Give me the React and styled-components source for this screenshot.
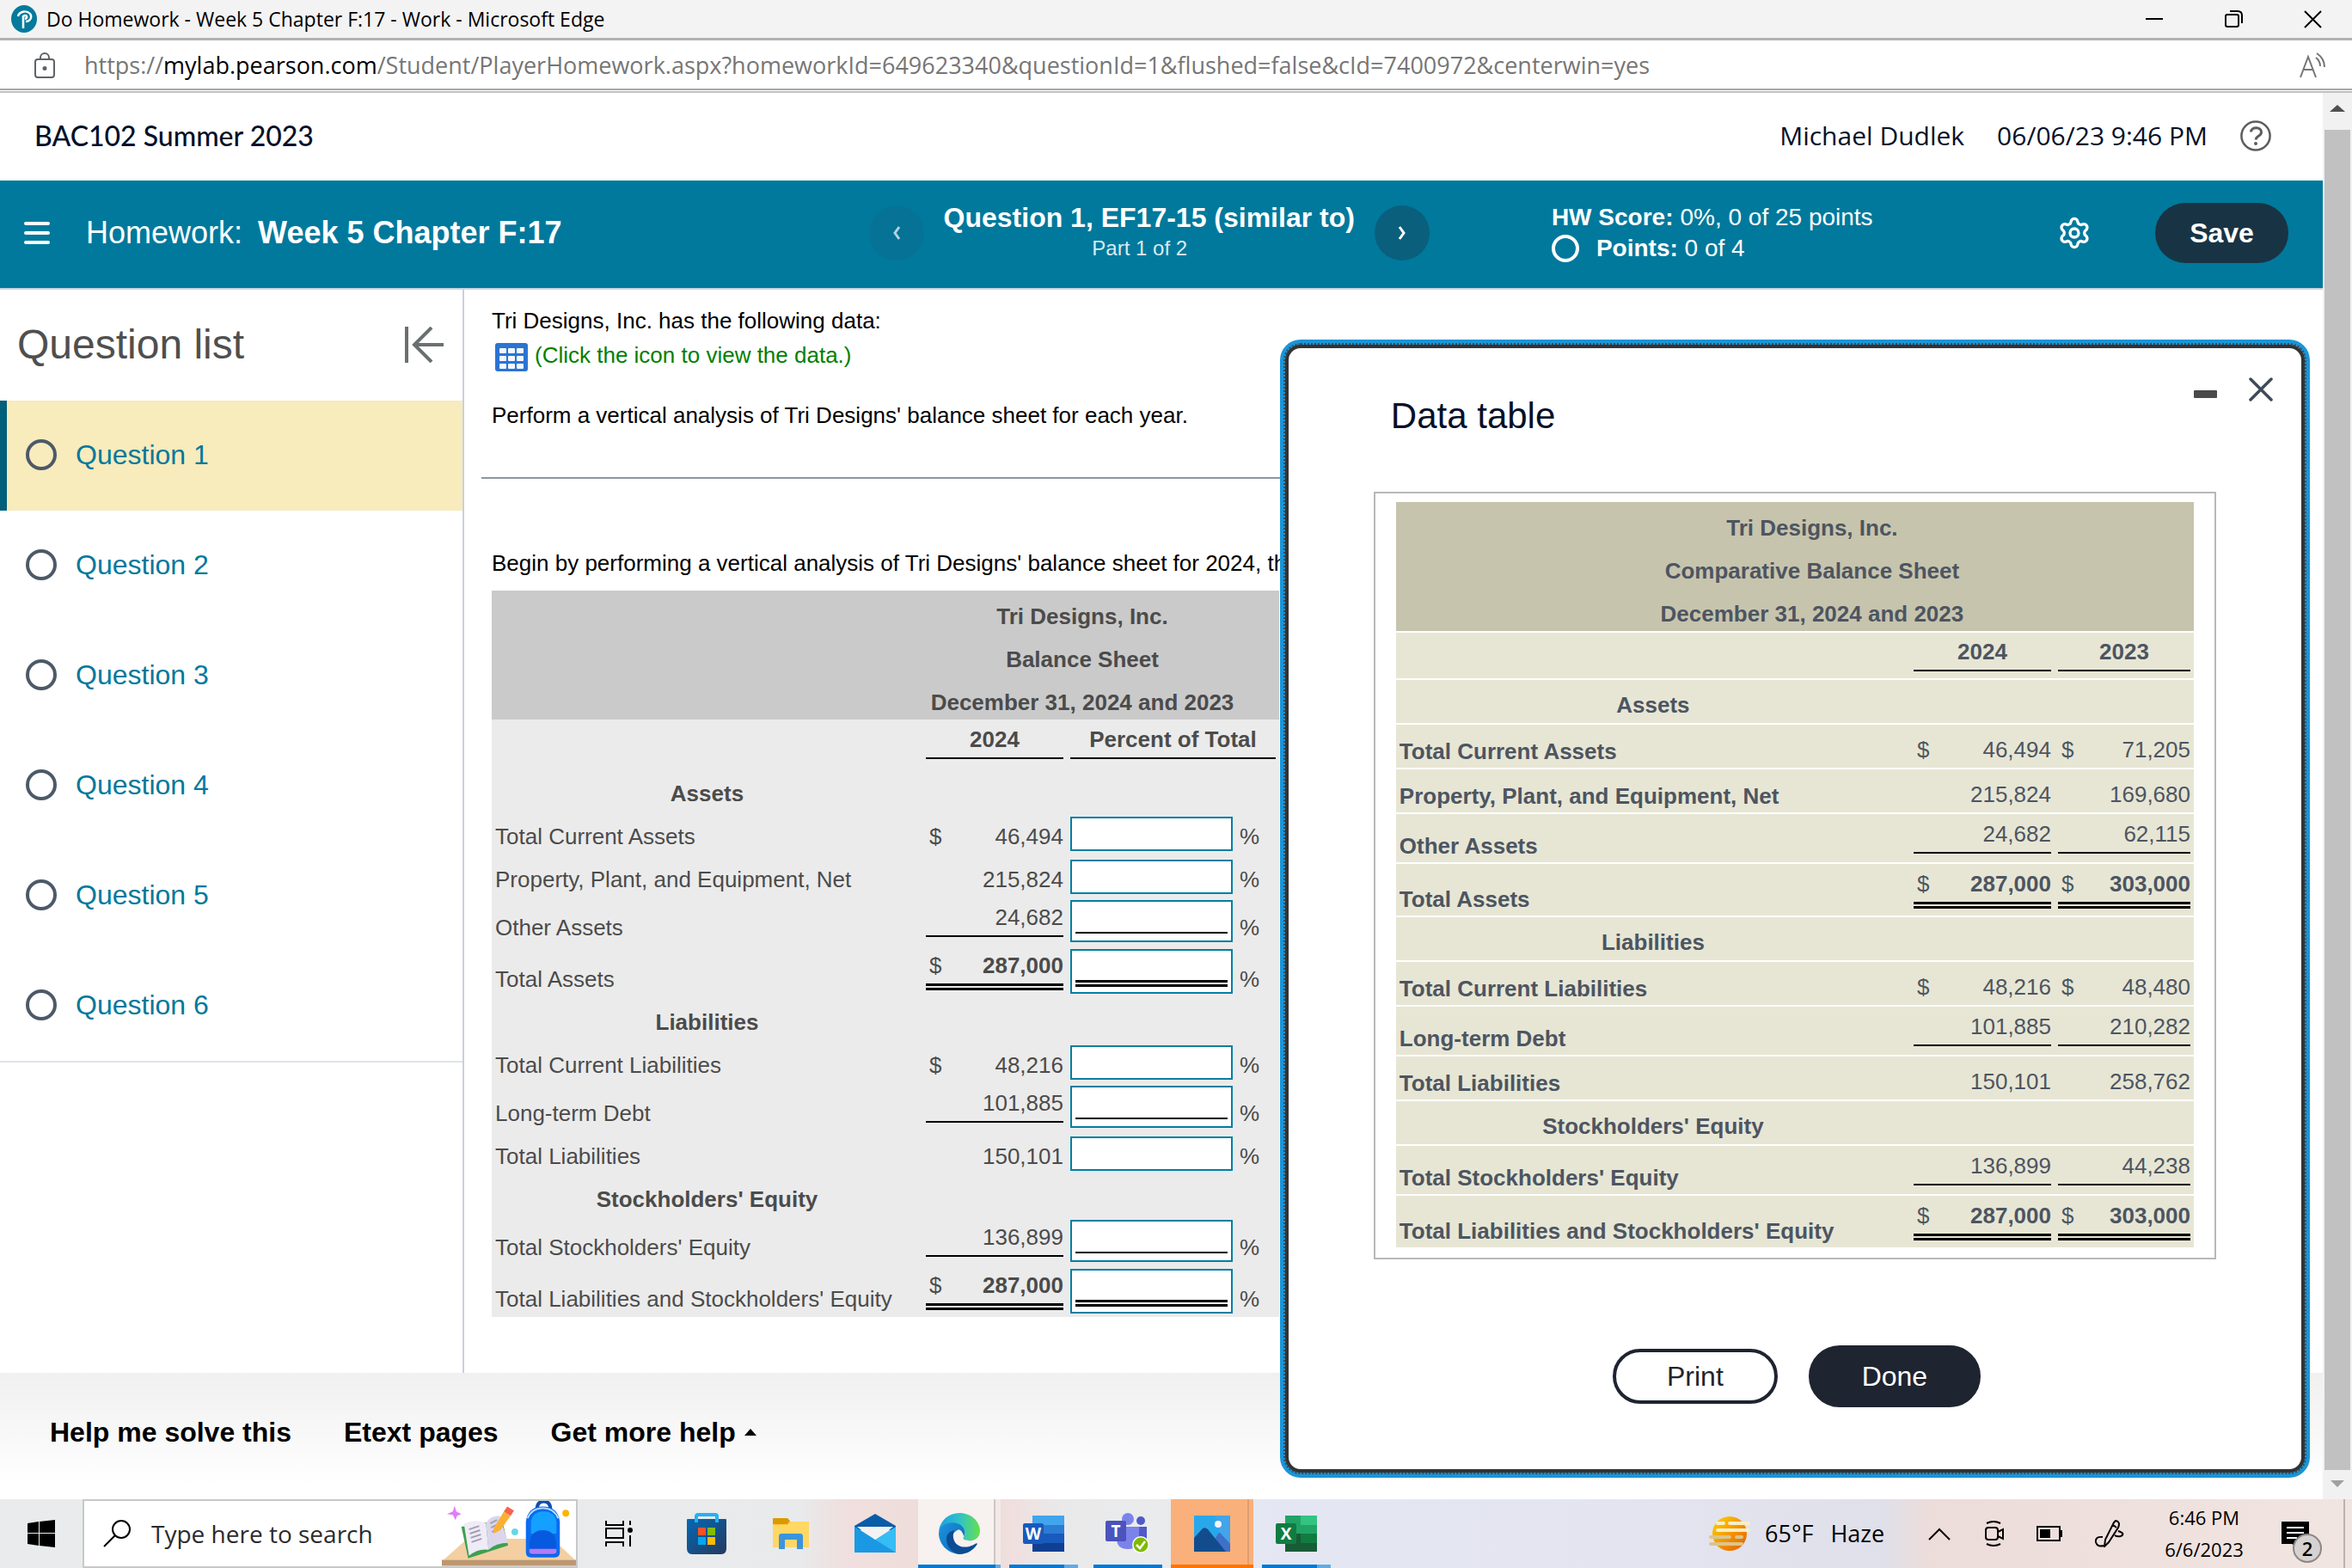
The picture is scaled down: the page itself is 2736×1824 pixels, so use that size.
import React from 'react';
import styled, { createGlobalStyle, css } from 'styled-components';
import { Settings } from 'lucide-react';

const GlobalStyle = createGlobalStyle`
  *, *::before, *::after {
    box-sizing: border-box;
  }
  body {
    margin: 0;
    background: #ffffff;
    font-family: "Liberation Sans", Arial, sans-serif;
    font-size: 26px;
    line-height: 30px;
    color: #000000;
  }
  button {
    margin: 0;
    padding: 0;
    border: 0;
    background: none;
    font: inherit;
    color: inherit;
    cursor: pointer;
  }
  svg {
    display: block;
    flex: none;
  }
`;

const uiFont = '"Open Sans", "Noto Sans", sans-serif';

const Window = styled.div`
  display: flex;
  flex-direction: column;
  min-height: 100vh;
`;

/* Browser chrome */

const TitleBar = styled.header`
  display: flex;
  align-items: center;
  height: 47px;
  padding-left: 13px;
  background: #f3f3f3;
  border-bottom: 3px solid #b2b2b2;
  font-family: ${uiFont};
  font-size: 23px;
`;

const WindowTitle = styled.span`
  flex: 1;
  margin-left: 11px;
`;

const WindowButton = styled.button`
  display: flex;
  justify-content: center;
  width: 92px;
`;

const AddressBar = styled.div`
  display: flex;
  align-items: center;
  height: 58px;
  padding: 2px 30px 0 40px;
  border-bottom: 2px solid #a8a8a8;
`;

const Url = styled.div`
  flex: 1;
  margin-left: 34px;
  font-family: ${uiFont};
  font-size: 27px;
  color: #767676;

  b {
    font-weight: 400;
    color: #000000;
  }
`;

const Viewport = styled.div`
  display: flex;
  flex: 1;
  margin-top: 1px;
  border-top: 2px solid #c0c0c0;
`;

const Page = styled.div`
  position: relative;
  display: flex;
  flex: 1;
  flex-direction: column;
  min-width: 0;
`;

const Scrollbar = styled.div`
  display: flex;
  flex-direction: column;
  align-items: center;
  width: 34px;
  padding: 14px 0;
  background: #f1f1f1;
`;

const Thumb = styled.div`
  flex: 1;
  width: 30px;
  margin: 21px 0 12px;
  background: #c1c1c1;
`;

/* Course header */

const CourseBar = styled.div`
  display: flex;
  align-items: center;
  height: 102px;
  padding: 0 60px 2px 40px;
  color: #05112a;
`;

const CourseName = styled.div`
  flex: 1;
  font-family: Lato, sans-serif;
  font-size: 32px;
  font-weight: 500;
`;

const UserInfo = styled.div`
  display: flex;
  align-items: center;
  gap: 38px;
  font-family: ${uiFont};
  font-size: 30px;
`;

const AssignmentBar = styled.div`
  display: grid;
  grid-template-columns: 37.4% auto 1fr;
  align-items: center;
  height: 127px;
  padding-bottom: 4px;
  background: #00799c;
  border-bottom: 2px solid #c7d3e0;
  color: #ffffff;
`;

const AssignmentName = styled.h1`
  display: flex;
  align-items: center;
  margin: 0;
  padding-left: 28px;
  font-size: 36px;
  font-weight: 400;

  b {
    margin-left: 18px;
  }
`;

const MenuButton = styled.button`
  margin-right: 42px;
`;

const QuestionNav = styled.div`
  display: flex;
  align-items: center;
  gap: 23px;
`;

const NavButton = styled.button`
  display: flex;
  align-items: center;
  justify-content: center;
  width: 64px;
  height: 64px;
  border-radius: 50%;
  background: ${(p) => (p.disabled ? '#067396' : '#0a5f7d')};
  color: ${(p) => (p.disabled ? '#b3d3df' : '#ffffff')};
`;

const QuestionTitle = styled.div`
  font-size: 24px;
  line-height: 36px;
  text-align: center;
  color: #dbeaf0;

  b {
    display: block;
    font-size: 32px;
    color: #ffffff;
  }
  span {
    padding-right: 22px;
  }
`;

const ScoreArea = styled.div`
  display: flex;
  align-items: center;
  padding: 0 40px 0 142px;
`;

const Score = styled.div`
  flex: 1;
  font-size: 28px;
  line-height: 36px;
`;

const ScoreLine = styled.div`
  display: flex;
  align-items: center;
  gap: ${(p) => p.$gap || 8}px;
`;

const Ring = styled.span`
  flex: none;
  width: ${(p) => p.$size}px;
  height: ${(p) => p.$size}px;
  border: 4px solid ${(p) => p.$color};
  border-radius: 50%;
`;

const SaveButton = styled.button`
  width: 155px;
  height: 70px;
  margin-left: 74px;
  border-radius: 35px;
  background: #183444;
  font-size: 32px;
  font-weight: 700;
`;

/* Question list */

const Body = styled.div`
  display: flex;
  flex: 1;
`;

const Sidebar = styled.nav`
  width: 540px;
  border-right: 2px solid #c9d0de;
`;

const SidebarHead = styled.div`
  display: flex;
  align-items: center;
  justify-content: space-between;
  height: 129px;
  padding: 0 21px 2px 20px;

  h2 {
    margin: 0;
    font-size: 48px;
    font-weight: 400;
    color: #4f4f4f;
  }
`;

const QuestionList = styled.ul`
  margin: 0;
  padding: 0;
  border-bottom: 2px solid #dfe3ea;
  list-style: none;
`;

const QuestionButton = styled.button`
  display: flex;
  align-items: center;
  gap: 22px;
  width: 100%;
  height: 128px;
  padding: 0 0 2px 22px;
  border-left: 8px solid ${(p) => (p.$active ? '#005f7a' : 'transparent')};
  background: ${(p) => (p.$active ? '#f8ebbc' : 'transparent')};
  font-size: 32px;
  color: #00799c;
`;

/* Exercise */

const Exercise = styled.main`
  flex: 1;
  min-width: 0;
  padding: 21px 32px 64px 20px;
  overflow: hidden;
  white-space: nowrap;
`;

const Text = styled.p`
  margin: 0;
  padding-left: 12px;
`;

const DataLink = styled.button`
  display: flex;
  align-items: flex-start;
  gap: 8px;
  height: 34px;
  margin: 10px 0 36px 16px;
  color: #008000;
`;

const Divider = styled.hr`
  margin: 57px 0 83px;
  border: 0;
  border-top: 2px solid #8d95a3;
`;

const SheetArea = styled.div`
  padding: 17px 0 0 12px;
`;

/* Balance sheets */

const themes = {
  plain: css`
    --ink: #4b4b4b;
    --head: #cacaca;
    --row: #ebebeb;
    border-spacing: 0;
  `,
  tan: css`
    --ink: #4d5561;
    --head: #c7c4ad;
    --row: #e7e6d5;
    border-spacing: 0 2px;
  `,
};

const Sheet = styled.table`
  ${(p) => themes[p.$theme]}
  width: ${(p) => p.$width};
  table-layout: fixed;
  border-collapse: separate;
  color: var(--ink);
`;

const SheetTitle = styled.th`
  padding: 15px 0 5px ${(p) => p.$indent}px;
  background: var(--head);
  text-align: center;

  span {
    display: block;
  }
  span + span {
    margin-top: 20px;
  }
`;

const Cell = styled.td`
  height: ${(p) => p.$height || 50}px;
  padding: 0 4px ${(p) => p.$bottom || 0}px;
  background: var(--row);
  vertical-align: bottom;
  text-align: ${(p) => p.$align || 'left'};
  font-weight: ${(p) => (p.$bold ? 700 : 400)};
`;

const lines = {
  single: '2px solid #000000',
  double: '8px double #000000',
};

const Amount = styled.div`
  display: flex;
  justify-content: ${(p) => (p.$center ? 'center' : 'space-between')};
  padding: 0 0 ${(p) => (p.$line ? 6 : 0)}px ${(p) => (p.$center ? 0 : 4)}px;
  border-bottom: ${(p) => lines[p.$line] || 0};

  b {
    font-weight: ${(p) => (p.$line === 'double' || p.$center ? 700 : 400)};
  }
`;

const Answer = styled.label`
  display: flex;
  align-items: flex-end;
  gap: 8px;
`;

const answerBox = {
  none: { height: 40, bottom: 0 },
  single: { height: 49, bottom: 8 },
  double: { height: 52, bottom: 6 },
};

const AnswerBox = styled.span`
  display: flex;
  width: 189px;
  height: ${(p) => answerBox[p.$line].height}px;
  padding: 0 4px ${(p) => answerBox[p.$line].bottom}px;
  border: 2px solid #007fa3;
  background: #ffffff;

  input {
    width: 100%;
    padding: 0;
    border: 0;
    border-bottom: ${(p) => lines[p.$line] || 0};
    border-radius: 0;
    background: none;
    font: inherit;
    text-align: right;
    outline: none;
  }
`;

const Percent = styled.span`
  padding-bottom: 2px;
`;

/* Data table dialog */

const Dialog = styled.section`
  position: absolute;
  top: 293px;
  right: 21px;
  width: 43.9%;
  border: 4px solid #333333;
  border-radius: 18px;
  background: #ffffff;
  box-shadow: 0 0 0 6px #1a95d8;
  outline: 2px dotted #3c4a52;
`;

const DialogHead = styled.div`
  display: flex;
  align-items: flex-start;
  padding: 34px 33px 0 119px;

  h2 {
    flex: 1;
    margin: 21px 0 64px;
    font-size: 42px;
    font-weight: 400;
    line-height: 48px;
    color: #05112a;
  }
  button + button {
    margin-left: 37px;
  }
`;

const Frame = styled.div`
  margin: 0 99px;
  padding: 8px 24px 10px 24px;
  border: 2px solid #b8b8b8;
`;

const DialogActions = styled.div`
  display: flex;
  align-items: center;
  justify-content: center;
  gap: 36px;
  margin: 100px 0 72px;
  padding-left: 4px;
`;

const DialogButton = styled.button`
  width: ${(p) => (p.$primary ? 200 : 192)}px;
  height: ${(p) => (p.$primary ? 72 : 64)}px;
  border: 4px solid #1e2430;
  border-radius: 36px;
  background: ${(p) => (p.$primary ? '#1e2430' : '#ffffff')};
  color: ${(p) => (p.$primary ? '#ffffff' : '#1e2430')};
  font-size: 32px;
`;

/* Help footer */

const HelpBar = styled.footer`
  display: flex;
  align-items: center;
  gap: 61px;
  height: 147px;
  padding: 0 58px 10px;
  background: linear-gradient(#f0f0f0, #ffffff 90%);
  font-size: 32px;
  font-weight: 700;

  button {
    display: flex;
    align-items: center;
    gap: 10px;
  }
`;

/* Taskbar */

const Taskbar = styled.footer`
  display: flex;
  align-items: center;
  height: 80px;
  background: linear-gradient(
    90deg,
    #e9ebec 0%,
    #e8eaeb 34%,
    #f0dfde 36%,
    #ecdcd7 42%,
    #f0dfde 43%,
    #e9e9ea 45%,
    #eaebec 49%,
    #e4e7f3 54%,
    #e3e4ef 70%,
    #dfe0ea 80%,
    #ecdcda 82%,
    #f1e5e1 100%
  );
  font-family: ${uiFont};
`;

const StartButton = styled.button`
  display: flex;
  justify-content: center;
  width: 96px;
`;

const Search = styled.label`
  display: flex;
  align-items: center;
  width: 576px;
  height: 80px;
  padding-left: 22px;
  border: 2px solid #c8c8c8;
  background: #ffffff;

  input {
    flex: 1;
    min-width: 0;
    padding: 0 0 0 24px;
    border: 0;
    background: none;
    font-family: ${uiFont};
    font-size: 28px;
    outline: none;
  }
  input::placeholder {
    color: #2b2b2b;
    opacity: 1;
  }
`;

const Tasks = styled.div`
  display: flex;
  flex: 1;
  gap: 2px;
`;

const activeTask = {
  edge: css`
    background: linear-gradient(90deg, #f7f1ef 88px, #cfc6c4 88px 90px, #f3eae8 90px);
    &::after {
      left: 0;
      right: 0;
      background: linear-gradient(90deg, #0078d7 90px, #62a9e4 90px);
    }
  `,
  photos: css`
    background: linear-gradient(90deg, #fab07a 89px, #e09e70 89px 91px, #fab07a 91px);
    &::after {
      left: 0;
      right: 0;
      background: #ff7300;
    }
  `,
  stacked: css`
    &::after {
      background: linear-gradient(90deg, #0078d7 64px, #62a9e4 64px);
    }
  `,
  open: css`
    &::after {
      background: #0078d7;
    }
  `,
};

const Task = styled.button`
  position: relative;
  display: flex;
  align-items: center;
  justify-content: center;
  width: 96px;
  height: 80px;

  &:first-child {
    margin-right: 4px;
  }
  &::after {
    content: '';
    position: absolute;
    left: 8px;
    right: 8px;
    bottom: 0;
    height: 4px;
  }
  ${(p) => activeTask[p.$state]}
`;

const Weather = styled.button`
  display: flex;
  align-items: center;
  gap: 17px;
  width: 236px;
  font-size: 27px;

  span + span {
    margin-left: 3px;
  }
`;

const TrayButton = styled.button`
  position: relative;
  display: flex;
  justify-content: center;
  width: ${(p) => p.$width || 64}px;
`;

const Clock = styled.div`
  width: 144px;
  font-size: 22px;
  line-height: 37px;
  text-align: center;
`;

const Badge = styled.span`
  position: absolute;
  top: 14px;
  left: 31px;
  width: 34px;
  height: 34px;
  border: 2px solid #8b8786;
  border-radius: 50%;
  background: #d6d2d1;
  font-size: 22px;
  font-weight: 600;
  line-height: 30px;
  text-align: center;
`;

const ShowDesktop = styled.div`
  width: 10px;
  height: 80px;
  margin-left: 22px;
  border-left: 2px solid #bdb1b0;
`;

const PearsonIcon = () => (
  <svg width="30" height="32" viewBox="0 0 30 32">
    <ellipse cx="15" cy="16" rx="15" ry="16" fill="#047a9c" />
    <path d="M8 13c1-5 9-8 14-3 3 4 0 9-5 9" fill="none" stroke="#fff" strokeWidth="2.4" />
    <path d="M14 27V13c4-3 6 2 2 3" fill="none" stroke="#fff" strokeWidth="2.6" />
  </svg>
);

const LockIcon = () => (
  <svg width="24" height="30" viewBox="0 0 24 30" fill="none" stroke="#5f6368" strokeWidth="2">
    <rect x="1" y="8" width="22" height="21" rx="3" />
    <path d="M7 8V6a5 5 0 0 1 10 0v2" />
    <circle cx="12" cy="18.500" r="1.500" fill="#5f6368" />
  </svg>
);

const ReadAloudIcon = () => (
  <svg width="31" height="30" viewBox="0 0 31 30" fill="none" stroke="#757575" strokeWidth="2">
    <path d="M1 29L10 5l9 24M4.500 20h11" />
    <path d="M19 6q5 4 5 10M20 1q9 6 9 16" />
  </svg>
);

const HelpIcon = () => (
  <svg width="36" height="36" viewBox="0 0 36 36" fill="none" stroke="#5d5d5d" strokeWidth="2.500">
    <circle cx="18" cy="18" r="16.600" />
    <path d="M12.500 13.500c.5-6.500 12-6.500 12 .3 0 5-6.300 4-6.300 8.700" strokeWidth="3" />
    <circle cx="18" cy="27" r="2" fill="#5d5d5d" stroke="none" />
  </svg>
);

const Chevron = ({ left }) => (
  <svg width="12" height="16" viewBox="0 0 12 16" fill="none" stroke="currentColor" strokeWidth="3">
    <path d={left ? 'M9 1L4 8l5 7' : 'M3 1l5 7-5 7'} />
  </svg>
);

const CollapseIcon = () => (
  <svg width="46" height="42" viewBox="0 0 46 42" fill="none" stroke="#6a7070" strokeWidth="4">
    <path d="M2 0v42M45 21H12M31 1L11 21l20 20" />
  </svg>
);

const GridIcon = () => (
  <svg width="38" height="34" viewBox="0 0 38 34">
    <rect y="1" width="38" height="33" rx="3" fill="#2b74d3" />
    {[0, 1, 2].map((r) =>
      [0, 1, 2].map((c) => (
        <rect key={`${r}${c}`} x={5 + c * 10} y={7 + r * 9} width="8" height="6" rx="1" fill="#f4f8fe" />
      ))
    )}
  </svg>
);

const SearchArt = () => (
  <svg width="156" height="76" viewBox="0 0 158 76">
    <path d="M30 44h100l27 25H2z" fill="#f3cfa2" />
    <path d="M0 69h158v7H0z" fill="#bd9770" />
    <path d="M15 5l2 7 6 3-5 2-2 5-3-6-7-1 7-3z" fill="#e17cf8" />
    <path d="M23 30l8 37 47-15-7-30z" fill="#3da04f" />
    <path d="M26 26q14-6 26 0l3 31q-12-2-23 7z" fill="#efebf7" />
    <path d="M52 26q4-9 16-9l10 32q-14 0-23 8z" fill="#dcd6ec" />
    <path d="M32 33l12-4M33 38l12-4M34 43l12-4M35 48l12-4M57 26l8-4M58 31l8-4M59 36l8-4" stroke="#a49fb3" strokeWidth="2" />
    <path d="M61 32l12-20 8 5-12 17-8 4z" fill="#fbb034" />
    <path d="M73 12l4-6 8 5-4 6z" fill="#f9604d" />
    <circle cx="86" cy="36" r="4" fill="#68d6e8" />
    <circle cx="146" cy="14" r="4" fill="#ffb300" />
    <path d="M112 10q0-10 8-10t8 10" fill="none" stroke="#0b4fae" strokeWidth="4" />
    <path d="M99 24q2-18 20-18t20 18v36q0 6-6 6h-28q-6 0-6-6z" fill="#0a6cf0" />
    <path d="M105 24q2-12 15-12t15 12v14h-30z" fill="#14a0ff" />
    <path d="M103 54q0-20 16-20t16 20v6q0 3-4 3h-24q-4 0-4-3z" fill="#0759e0" />
    <path d="M103 56h32v3q0 3-4 3h-24q-4 0-4-3z" fill="#b57bf5" />
    <path d="M101 20q5-12 18-12t18 12" fill="none" stroke="#b9dcff" strokeWidth="2" />
  </svg>
);

const TaskViewIcon = () => (
  <svg width="32" height="30" viewBox="0 0 32 30" fill="none" stroke="#000" strokeWidth="2">
    <path d="M1 0v5h20V0M1 30v-5h20v5M29 0v5M29 17v13" />
    <rect x="1" y="9" width="20" height="11" />
    <circle cx="29" cy="11" r="3" fill="#000" stroke="none" />
  </svg>
);

const StoreIcon = () => (
  <svg width="46" height="48" viewBox="0 0 46 48">
    <defs>
      <linearGradient id="bag" x2="1" y2="1">
        <stop stopColor="#0568b4" />
        <stop offset="1" stopColor="#243a5e" />
      </linearGradient>
    </defs>
    <path d="M0 8q0-1 1-1h44q1 0 1 1v33q0 7-6 7H6q-6 0-6-7z" fill="url(#bag)" />
    <path d="M11 11V4q0-2 2-2h20q2 0 2 2v7" fill="none" stroke="#22b1f5" strokeWidth="4" />
    <path d="M13 17h9v9h-9z" fill="#f35325" />
    <path d="M24 17h9v9h-9z" fill="#81bc06" />
    <path d="M13 28h9v9h-9z" fill="#05a6f0" />
    <path d="M24 28h9v9h-9z" fill="#ffba08" />
  </svg>
);

const FolderIcon = () => (
  <svg width="42" height="36" viewBox="0 0 42 36">
    <path d="M0 1h17l3 3h22v30H0z" fill="#ffca42" />
    <path d="M0 1q0-1 1-1h16l3 3-3 4H0z" fill="#d99a00" />
    <path d="M0 8h17l4-4h20q1 0 1 1v29H0z" fill="#ffd765" />
    <path d="M7 36V21q0-3 3-3h22q3 0 3 3v15h-7V25H14v11z" fill="#3b94dc" />
  </svg>
);

const MailIcon = () => (
  <svg width="48" height="46" viewBox="0 0 48 46">
    <path d="M0 14L24 0l24 14v5H0z" fill="#0a5ba8" />
    <path d="M3 15h42L24 32z" fill="#f3f3f3" />
    <path d="M0 15l24 15 24-15v30H0z" fill="#35bdf4" />
    <path d="M0 15l48 30H0z" fill="#1b98e4" />
    <path d="M4 15h40L24 30z" fill="#f3f3f3" />
  </svg>
);

const EdgeIcon = () => (
  <svg width="48" height="48" viewBox="0 0 256 256">
    <defs>
      <linearGradient id="edgeTop" x1="0" y1=".5" x2="1" y2=".5">
        <stop stopColor="#1d9fe0" />
        <stop offset=".5" stopColor="#2fc2c8" />
        <stop offset="1" stopColor="#67e04c" />
      </linearGradient>
      <linearGradient id="edgeSide" y2="1">
        <stop stopColor="#1b95dd" />
        <stop offset="1" stopColor="#0e64b8" />
      </linearGradient>
    </defs>
    <path d="M0 120C4 50 60 0 128 0c75 0 128 54 128 110 0 40-32 62-66 62-28 0-38-9-38-17 0-6 9-9 9-27 0-26-27-52-64-52C50 76 5 90 0 120z" fill="url(#edgeTop)" />
    <path d="M0 124C5 80 45 60 90 60c40 0 71 28 71 62 0 9-2 17-6 23-5-28-22-40-30-42-30 10-45 38-45 67 0 40 30 74 68 85-82 6-148-55-148-131z" fill="url(#edgeSide)" />
    <path d="M96 106c-20 50 6 102 60 105 35 2 60-14 75-22 6-3 10 1 6 7-26 40-68 62-114 59-45-13-75-50-75-95 0-27 18-46 48-54z" fill="#0b4c94" />
  </svg>
);

const WordIcon = () => (
  <svg width="48" height="42" viewBox="0 0 48 42">
    <path d="M11 0h37v11H11z" fill="#41a5ee" />
    <path d="M11 11h37v10H11z" fill="#2b7cd3" />
    <path d="M11 21h37v11H11z" fill="#185abd" />
    <path d="M11 32h37v10H11z" fill="#103f91" />
    <rect y="9" width="24" height="24" rx="2" fill="#185abd" />
    <text x="12" y="28" textAnchor="middle" fontFamily="Open Sans, sans-serif" fontSize="19" fontWeight="700" fill="#fff">
      W
    </text>
  </svg>
);

const ExcelIcon = () => (
  <svg width="48" height="42" viewBox="0 0 48 42">
    <path d="M11 0h37v42H11z" fill="#21a366" />
    <path d="M29 0h19v11H29z" fill="#33c481" />
    <path d="M11 21h18v11H11z" fill="#185c37" />
    <path d="M29 21h19v11H29z" fill="#107c41" />
    <path d="M11 32h37v10H11z" fill="#185c37" />
    <rect y="9" width="24" height="24" rx="2" fill="#107c41" />
    <text x="12" y="28" textAnchor="middle" fontFamily="Open Sans, sans-serif" fontSize="19" fontWeight="700" fill="#fff">
      X
    </text>
  </svg>
);

const TeamsIcon = () => (
  <svg width="52" height="48" viewBox="0 0 52 48">
    <circle cx="26" cy="7" r="7" fill="#7b83eb" />
    <circle cx="41" cy="9" r="5" fill="#5059c9" />
    <path d="M33 16h15v14q0 8-8 8h-7z" fill="#5059c9" />
    <path d="M13 16h26v14q0 12-13 12T13 30z" fill="#7b83eb" />
    <rect y="9" width="24" height="24" rx="2" fill="#4b53bc" />
    <text x="12" y="28" textAnchor="middle" fontFamily="Open Sans, sans-serif" fontSize="19" fontWeight="700" fill="#fff">
      T
    </text>
    <circle cx="41" cy="37" r="10" fill="#fff" />
    <circle cx="41" cy="37" r="8.5" fill="#7fba00" />
    <path d="M36 37l4 4 6-8" fill="none" stroke="#fff" strokeWidth="2.5" />
  </svg>
);

const PhotosIcon = () => (
  <svg width="42" height="42" viewBox="0 0 42 42">
    <path d="M0 0h42v42H0z" fill="#28a8ea" />
    <path d="M24 0h18v32L30 20z" fill="#5b9fe8" opacity=".5" />
    <path d="M16 42l12-21q1-2 3 0l11 12v9z" fill="#3f6fc9" />
    <path d="M0 26l10-11q3-2 6 1l21 26H0z" fill="#134c8c" />
    <circle cx="28" cy="10" r="4" fill="#f3f6fa" />
  </svg>
);

const HazeIcon = () => (
  <svg width="48" height="40" viewBox="0 0 48 40">
    <defs>
      <linearGradient id="sun" x2="1" y2="1">
        <stop stopColor="#ffd500" />
        <stop offset="1" stopColor="#e65a00" />
      </linearGradient>
    </defs>
    <circle cx="24" cy="20" r="20" fill="url(#sun)" />
    <path d="M10 8h7M24 8h22M10 16h36" stroke="#fbeec2" strokeWidth="4" strokeLinecap="round" />
    <path d="M2 24h22M32 24h6M2 32h36" stroke="#dcc58a" strokeWidth="4" strokeLinecap="round" />
  </svg>
);

const assets = [
  { section: 'Assets' },
  { label: 'Total Current Assets', values: ['46,494', '71,205'], dollar: true },
  { label: 'Property, Plant, and Equipment, Net', values: ['215,824', '169,680'] },
  { label: 'Other Assets', values: ['24,682', '62,115'], line: 'single' },
  { label: 'Total Assets', values: ['287,000', '303,000'], dollar: true, line: 'double' },
  { section: 'Liabilities' },
  { label: 'Total Current Liabilities', values: ['48,216', '48,480'], dollar: true },
  { label: 'Long-term Debt', values: ['101,885', '210,282'], line: 'single' },
  { label: 'Total Liabilities', values: ['150,101', '258,762'] },
  { section: "Stockholders' Equity" },
  { label: "Total Stockholders' Equity", values: ['136,899', '44,238'], line: 'single' },
  {
    label: "Total Liabilities and Stockholders' Equity",
    values: ['287,000', '303,000'],
    dollar: true,
    line: 'double',
  },
];

const rowHeight = { single: 56, double: 60 };
const valueBottom = { single: 10, double: 8 };

function AmountCell({ row, value }) {
  return (
    <Cell $height={rowHeight[row.line]} $bottom={valueBottom[row.line] || 6}>
      <Amount $line={row.line}>
        <span>{row.dollar ? '$' : ''}</span>
        <b>{value}</b>
      </Amount>
    </Cell>
  );
}

function YearCell({ children, ...rest }) {
  return (
    <Cell as="th" scope="col" {...rest}>
      <Amount $line="single" $center>
        <b>{children}</b>
      </Amount>
    </Cell>
  );
}

function SectionRow({ title }) {
  return (
    <tr>
      <Cell as="th" scope="rowgroup" $bold $align="center" $bottom={6}>
        {title}
      </Cell>
      <Cell />
      <Cell />
    </tr>
  );
}

function AnswerSheet() {
  return (
    <Sheet $theme="plain" $width="916px">
      <colgroup>
        <col />
        <col width="168" />
        <col width="247" />
      </colgroup>
      <thead>
        <tr>
          <SheetTitle colSpan={3} $indent={458}>
            <span>Tri Designs, Inc.</span>
            <span>Balance Sheet</span>
            <span>December 31, 2024 and 2023</span>
          </SheetTitle>
        </tr>
        <tr>
          <Cell $height={57} />
          <YearCell $bottom={11}>2024</YearCell>
          <YearCell $bottom={11}>Percent of Total</YearCell>
        </tr>
      </thead>
      <tbody>
        {assets.map((row) =>
          row.section ? (
            <SectionRow key={row.section} title={row.section} />
          ) : (
            <tr key={row.label}>
              <Cell as="th" scope="row" $bottom={6}>
                {row.label}
              </Cell>
              <AmountCell row={row} value={row.values[0]} />
              <Cell $bottom={4}>
                <Answer>
                  <AnswerBox $line={row.line || 'none'}>
                    <input type="text" aria-label={`${row.label}, percent of total`} />
                  </AnswerBox>
                  <Percent>%</Percent>
                </Answer>
              </Cell>
            </tr>
          )
        )}
      </tbody>
    </Sheet>
  );
}

function DataSheet() {
  return (
    <Sheet $theme="tan" $width="100%">
      <colgroup>
        <col />
        <col width="168" />
        <col width="162" />
      </colgroup>
      <thead>
        <tr>
          <SheetTitle colSpan={3} $indent={40}>
            <span>Tri Designs, Inc.</span>
            <span>Comparative Balance Sheet</span>
            <span>December 31, 2024 and 2023</span>
          </SheetTitle>
        </tr>
        <tr>
          <Cell $height={53} />
          <YearCell $bottom={8}>2024</YearCell>
          <YearCell $bottom={8}>2023</YearCell>
        </tr>
      </thead>
      <tbody>
        {assets.map((row) =>
          row.section ? (
            <SectionRow key={row.section} title={row.section} />
          ) : (
            <tr key={row.label}>
              <Cell as="th" scope="row" $bold $bottom={4}>
                {row.label}
              </Cell>
              <AmountCell row={row} value={row.values[0]} />
              <AmountCell row={row} value={row.values[1]} />
            </tr>
          )
        )}
      </tbody>
    </Sheet>
  );
}

function DataDialog() {
  return (
    <Dialog role="dialog" aria-labelledby="data-table-title">
      <DialogHead>
        <h2 id="data-table-title">Data table</h2>
        <button type="button" aria-label="Minimize">
          <svg width="27" height="28" viewBox="0 0 27 28">
            <rect y="15" width="27" height="9" rx="1" fill="#4a4a4a" />
          </svg>
        </button>
        <button type="button" aria-label="Close">
          <svg width="28" height="28" viewBox="0 0 28 28" stroke="#3f4a59" strokeWidth="3.5" strokeLinecap="round">
            <path d="M2 2l24 24M26 2L2 26" />
          </svg>
        </button>
      </DialogHead>
      <Frame>
        <DataSheet />
      </Frame>
      <DialogActions>
        <DialogButton type="button">Print</DialogButton>
        <DialogButton type="button" $primary>
          Done
        </DialogButton>
      </DialogActions>
    </Dialog>
  );
}

function Browser() {
  return (
    <>
      <TitleBar>
        <PearsonIcon />
        <WindowTitle>Do Homework - Week 5 Chapter F:17 - Work - Microsoft Edge</WindowTitle>
        <WindowButton type="button" aria-label="Minimize window">
          <svg width="20" height="20" stroke="#000" strokeWidth="2">
            <path d="M0 10h20" />
          </svg>
        </WindowButton>
        <WindowButton type="button" aria-label="Restore window">
          <svg width="21" height="20" fill="none" stroke="#000" strokeWidth="2">
            <rect x="1" y="5" width="15" height="14" rx="2" />
            <path d="M6 1h9q5 0 5 5v9" />
          </svg>
        </WindowButton>
        <WindowButton type="button" aria-label="Close window">
          <svg width="21" height="21" stroke="#000" strokeWidth="2">
            <path d="M1 1l19 19M20 1L1 20" />
          </svg>
        </WindowButton>
      </TitleBar>
      <AddressBar>
        <LockIcon />
        <Url>
          https://<b>mylab.pearson.com</b>
          /Student/PlayerHomework.aspx?homeworkId=649623340&amp;questionId=1&amp;flushed=false&amp;cId=7400972&amp;centerwin=yes
        </Url>
        <ReadAloudIcon />
      </AddressBar>
    </>
  );
}

function PageHeader() {
  return (
    <>
      <CourseBar>
        <CourseName>BAC102 Summer 2023</CourseName>
        <UserInfo>
          <span>Michael Dudlek</span>
          <span>06/06/23 9:46 PM</span>
          <button type="button" aria-label="Help">
            <HelpIcon />
          </button>
        </UserInfo>
      </CourseBar>
      <AssignmentBar>
        <AssignmentName>
          <MenuButton type="button" aria-label="Menu">
            <svg width="30" height="26" stroke="#fff" strokeWidth="4" strokeLinecap="round">
              <path d="M2 2h26M2 13h26M2 24h26" />
            </svg>
          </MenuButton>
          Homework: <b>Week 5 Chapter F:17</b>
        </AssignmentName>
        <QuestionNav>
          <NavButton type="button" disabled aria-label="Previous question">
            <Chevron left />
          </NavButton>
          <QuestionTitle>
            <b>Question 1, EF17-15 (similar to)</b>
            <span>Part 1 of 2</span>
          </QuestionTitle>
          <NavButton type="button" aria-label="Next question">
            <Chevron />
          </NavButton>
        </QuestionNav>
        <ScoreArea>
          <Score>
            <ScoreLine>
              <b>HW Score:</b> 0%, 0 of 25 points
            </ScoreLine>
            <ScoreLine $gap={20}>
              <Ring $size={32} $color="#ffffff" />
              <span>
                <b>Points:</b> 0 of 4
              </span>
            </ScoreLine>
          </Score>
          <button type="button" aria-label="Settings">
            <Settings size={40} strokeWidth={2} />
          </button>
          <SaveButton type="button">Save</SaveButton>
        </ScoreArea>
      </AssignmentBar>
    </>
  );
}

function SystemTaskbar() {
  return (
    <Taskbar>
      <StartButton type="button" aria-label="Start">
        <svg width="32" height="32" viewBox="0 0 32 32">
          <path d="M0 4l13-2v13H0zM14 2l18-2v15H14zM0 16h13v14L0 28zM14 16h18v16l-18-2z" />
        </svg>
      </StartButton>
      <Search>
        <svg width="32" height="32" viewBox="0 0 32 32" fill="none" stroke="#000" strokeWidth="2">
          <circle cx="21" cy="11" r="10" />
          <path d="M14 18L1 31" />
        </svg>
        <input type="text" placeholder="Type here to search" aria-label="Search" />
        <SearchArt />
      </Search>
      <Tasks>
        <Task type="button" aria-label="Task view">
          <TaskViewIcon />
        </Task>
        <Task type="button" aria-label="Store">
          <StoreIcon />
        </Task>
        <Task type="button" aria-label="File Explorer">
          <FolderIcon />
        </Task>
        <Task type="button" aria-label="Mail">
          <MailIcon />
        </Task>
        <Task type="button" $state="edge" aria-label="Edge">
          <EdgeIcon />
        </Task>
        <Task type="button" $state="stacked" aria-label="Word">
          <WordIcon />
        </Task>
        <Task type="button" $state="open" aria-label="Teams">
          <TeamsIcon />
        </Task>
        <Task type="button" $state="photos" aria-label="Photos">
          <PhotosIcon />
        </Task>
        <Task type="button" $state="stacked" aria-label="Excel">
          <ExcelIcon />
        </Task>
      </Tasks>
      <Weather type="button">
        <HazeIcon />
        <span>65°F</span>
        <span>Haze</span>
      </Weather>
      <TrayButton type="button" aria-label="Show hidden icons">
        <svg width="26" height="15" fill="none" stroke="#000" strokeWidth="2">
          <path d="M1 14L13 2l12 12" />
        </svg>
      </TrayButton>
      <TrayButton type="button" aria-label="Meet now">
        <svg width="23" height="30" fill="none" stroke="#000" strokeWidth="2">
          <rect x="1" y="8" width="14" height="14" rx="3" />
          <path d="M15 13l6-3v11l-6-3M2 3q8-4 16 0M2 27q8 4 16 0" />
        </svg>
      </TrayButton>
      <TrayButton type="button" aria-label="Battery">
        <svg width="30" height="18" fill="none" stroke="#000" strokeWidth="2">
          <rect x="1" y="1" width="26" height="16" />
          <path d="M29 5v8" />
          <rect x="4" y="4" width="12" height="10" fill="#000" stroke="none" />
        </svg>
      </TrayButton>
      <TrayButton type="button" $width={76} aria-label="Pen menu">
        <svg width="34" height="32" fill="none" stroke="#000" strokeWidth="2">
          <path d="M24 1q6 1 3 8L16 26l-5 5 1-8L22 3zM20 5l5 4M9 20q-9-1-8 6 2 6 9 4M27 13q9 3 3 6-4 1-7-1" />
        </svg>
      </TrayButton>
      <Clock>
        <div>6:46 PM</div>
        <div>6/6/2023</div>
      </Clock>
      <TrayButton type="button" $width={68} aria-label="Notifications">
        <svg width="32" height="28" viewBox="0 0 32 28">
          <path d="M0 0h32v26H16v2l-4-2H0z" />
          <path d="M6 7h20M6 13h20M6 19h12" stroke="#fff" strokeWidth="2" />
        </svg>
        <Badge>2</Badge>
      </TrayButton>
      <ShowDesktop />
    </Taskbar>
  );
}

export default function App() {
  return (
    <Window>
      <GlobalStyle />
      <Browser />
      <Viewport>
        <Page>
          <PageHeader />
          <Body>
            <Sidebar>
              <SidebarHead>
                <h2>Question list</h2>
                <button type="button" aria-label="Collapse question list">
                  <CollapseIcon />
                </button>
              </SidebarHead>
              <QuestionList>
                {[1, 2, 3, 4, 5, 6].map((n) => (
                  <li key={n}>
                    <QuestionButton type="button" $active={n === 1}>
                      <Ring $size={36} $color="#4c5968" />
                      Question {n}
                    </QuestionButton>
                  </li>
                ))}
              </QuestionList>
            </Sidebar>
            <Exercise>
              <Text>Tri Designs, Inc. has the following data:</Text>
              <DataLink type="button">
                <GridIcon />
                (Click the icon to view the data.)
              </DataLink>
              <Text>Perform a vertical analysis of Tri Designs' balance sheet for each year.</Text>
              <Divider />
              <Text>Begin by performing a vertical analysis of Tri Designs' balance sheet for 2024, then 2023.</Text>
              <SheetArea>
                <AnswerSheet />
              </SheetArea>
            </Exercise>
          </Body>
          <HelpBar>
            <button type="button">Help me solve this</button>
            <button type="button">Etext pages</button>
            <button type="button">
              Get more help
              <svg width="14" height="8">
                <path d="M0 8l7-8 7 8z" />
              </svg>
            </button>
          </HelpBar>
          <DataDialog />
        </Page>
        <Scrollbar>
          <svg width="18" height="8">
            <path d="M0 8l9-8 9 8z" fill="#505050" />
          </svg>
          <Thumb />
          <svg width="16" height="8">
            <path d="M0 0h16L8 8z" fill="#a0a0a0" />
          </svg>
        </Scrollbar>
      </Viewport>
      <SystemTaskbar />
    </Window>
  );
}
